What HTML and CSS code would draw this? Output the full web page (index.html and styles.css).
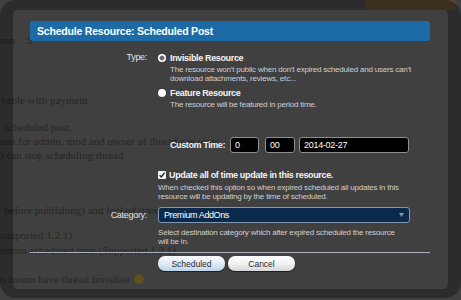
FILE: index.html
```html
<!DOCTYPE html>
<html>
<head>
<meta charset="utf-8">
<link rel="stylesheet" href="styles.css">
</head>
<body>
<div class="page">
  <header class="page-head"><span class="promo"></span></header>
  <p class="line l1"><span class="crumb">sen</span><span class="crumb crumb-s">S</span></p>
  <p class="line l2">vable with payment</p>
  <div class="para p3">
    <p class="line indent4">scheduled post.</p>
    <p class="line">ons for admin, mod and owner of thread can view</p>
    <p class="line">) can stop scheduling thread</p>
  </div>
  <p class="line l6 indent4">before publishing) and locked (thread is set after scheduled time expired)</p>
  <div class="para p7">
    <p class="line tall">supported 1.2.1)</p>
    <p class="line tall">ustom scheduled time (Supported 1.2.1)</p>
  </div>
  <p class="line l9">n forum have thread invisible <span class="smiley"></span></p>
</div>

<div class="overlay">
  <div class="dialog">
    <h2 class="dialog-title">Schedule Resource: Scheduled Post</h2>
    <form class="form">
      <dl class="ctrl-unit unit-type">
        <dt class="label">Type:</dt>
        <dd class="ctrl">
          <div class="choice"><span class="radio checked"></span><span class="choice-label">Invisible Resource</span></div>
          <p class="explain indented">The resource won't public when don't expired scheduled and users can't download attachments, reviews, etc...</p>
          <div class="choice choice-2"><span class="radio"></span><span class="choice-label">Feature Resource</span></div>
          <p class="explain indented">The resource will be featured in period time.</p>
        </dd>
      </dl>
      <dl class="ctrl-unit unit-time">
        <dt class="label"></dt>
        <dd class="ctrl time-row">
          <span class="time-label">Custom Time:</span>
          <input class="text-input w-hour" type="text" value="0">
          <input class="text-input w-min" type="text" value="00">
          <input class="text-input w-date" type="text" value="2014-02-27">
        </dd>
      </dl>
      <dl class="ctrl-unit unit-check">
        <dt class="label"></dt>
        <dd class="ctrl">
          <div class="check-row">
            <svg class="checkbox" width="8" height="8" viewBox="0 0 8 8"><rect x="0" y="0" width="8" height="8" rx="1" fill="#f4f4f4"/><path d="M1.6 4.2 L3.3 6 L6.6 1.6" fill="none" stroke="#222" stroke-width="1.4"/></svg>
            <span class="check-label">Update all of time update in this resource.</span>
          </div>
          <p class="explain hint">When checked this option so when expired scheduled all updates in this resource will be updating by the time of scheduled.</p>
        </dd>
      </dl>
      <dl class="ctrl-unit unit-cat">
        <dt class="label label-cat">Category:</dt>
        <dd class="ctrl">
          <div class="select"><span class="select-text">Premium AddOns</span><svg class="select-arrow" width="5" height="4" viewBox="0 0 5 4"><path d="M0 0 H5 L2.5 4 Z" fill="#8a97a6"/></svg></div>
          <p class="explain hint-cat">Select destination category which after expired scheduled the resource will be in.</p>
        </dd>
      </dl>
      <div class="submit-unit">
        <button type="button" class="btn btn-primary">Scheduled</button>
        <button type="button" class="btn btn-cancel">Cancel</button>
      </div>
    </form>
  </div>
</div>
</body>
</html>
```

FILE: styles.css
```css
html, body {
  margin: 0;
  padding: 0;
}
body {
  width: 461px;
  height: 300px;
  overflow: hidden;
  position: relative;
  background: #404040;
  color: #272727;
  font-family: "Liberation Serif", "Times New Roman", serif;
}

/* page underneath */
.page {
  font-size: 11px;
  line-height: 14px;
}
.page-head {
  display: flex;
  height: 10px;
}
.promo {
  margin-left: auto;
  margin-right: 6px;
  width: 90px;
  background: #56442f;
}
.line {
  margin: 0;
  white-space: nowrap;
}
.l1 {
  margin-top: 23px;
  display: flex;
}
.crumb-s { margin-left: 12px; }
.l2 { margin-top: 46px; text-indent: 1px; }
.p3 { margin-top: 13px; }
.indent4 { text-indent: 4px; }
.l6 { margin-top: 41px; }
.p7 { margin-top: 11px; }
.tall { line-height: 15px; }
.l9 { margin-top: 14px; }
.smiley {
  display: inline-block;
  width: 10px;
  height: 10px;
  border-radius: 50%;
  background: #5e5120;
  vertical-align: -1px;
  margin-left: 2px;
}

/* overlay */
.overlay {
  position: absolute;
  left: 0;
  top: 0;
  width: 461px;
  height: 298px;
  box-sizing: border-box;
  border-style: solid;
  border-color: rgba(0, 0, 0, 0.31);
  border-width: 10px 13px 9px 13px;
  border-radius: 16px;
  font-family: "Liberation Sans", Arial, sans-serif;
  color: #fff;
}
.dialog {
  padding: 11px 18px 0 17px;
}
.dialog-title {
  margin: 0;
  height: 20px;
  line-height: 20px;
  padding-left: 7px;
  background: #1c6ba7;
  border-radius: 3px;
  color: #fff;
  font-size: 10.5px;
  letter-spacing: -0.2px;
  font-weight: bold;
}

.form {
  margin: 10px 0 0 0;
}
.ctrl-unit {
  display: grid;
  grid-template-columns: 117px 1fr;
  column-gap: 11px;
  margin: 0;
}
.label {
  margin: 0;
  text-align: right;
  font-size: 9px;
  letter-spacing: -0.3px;
  line-height: 13px;
  color: #e2e2e2;
}
.ctrl {
  margin: 0;
}

.choice {
  display: flex;
  align-items: center;
  height: 13px;
  gap: 4px;
}
.choice-2 { margin-top: 3px; }
.radio {
  width: 8px;
  height: 8px;
  border-radius: 50%;
  background: radial-gradient(circle at 50% 40%, #ffffff 55%, #c9c9c9 100%);
}
.radio.checked {
  background: radial-gradient(circle, #5a5a5a 0, #6d6d6d 1.6px, #9a9a9a 2.3px, #ffffff 2.9px);
}
.choice-label {
  font-size: 9px;
  letter-spacing: -0.35px;
  font-weight: bold;
  color: #f4f4f4;
}
.explain {
  margin: 1px 0 0 0;
  max-width: 250px;
  font-size: 8px;
  letter-spacing: -0.2px;
  line-height: 9px;
  color: #cfcfcf;
}
.indented {
  margin-left: 12px;
}

.unit-time { margin-top: 28px; }
.time-row {
  display: flex;
  align-items: center;
  padding-left: 12px;
}
.time-label {
  font-size: 9px;
  letter-spacing: -0.4px;
  font-weight: bold;
  color: #f0f0f0;
  margin-right: 5px;
}
.text-input {
  box-sizing: border-box;
  height: 16px;
  margin: 0;
  padding: 0 4px;
  background: #000;
  border: 1px solid #8e8e8e;
  border-radius: 3px;
  color: #fff;
  font-family: inherit;
  font-size: 9px;
  letter-spacing: -0.3px;
  outline: none;
}
.w-hour { width: 29px; margin-right: 6px; }
.w-min { width: 30px; margin-right: 4px; }
.w-date { width: 110px; }

.unit-check { margin-top: 15px; }
.check-row {
  display: flex;
  align-items: center;
  height: 13px;
  gap: 3px;
}
.checkbox { display: block; }
.check-label {
  font-size: 9px;
  letter-spacing: -0.35px;
  font-weight: bold;
  color: #f4f4f4;
}
.hint { margin-top: 2px; }

.unit-cat { margin-top: 6px; }
.label-cat { line-height: 16px; }
.select {
  box-sizing: border-box;
  width: 252px;
  height: 16px;
  display: flex;
  align-items: center;
  padding: 0 5px;
  background: #0b2a4b;
  border: 1px solid #8198b0;
  border-radius: 3px;
}
.select-text {
  flex: 1;
  font-size: 9px;
  letter-spacing: -0.4px;
  color: #fff;
}
.select-arrow { display: block; }
.hint-cat { margin-top: 5px; max-width: 240px; }

.submit-unit {
  margin-top: 6px;
  border-top: 1px solid #aab5c1;
  padding: 3px 0 0 128px;
  display: flex;
  gap: 3px;
}
.btn {
  width: 67px;
  height: 15px;
  margin: 0;
  padding: 0;
  border: none;
  border-radius: 7px;
  box-shadow: 0 1px 1px rgba(0, 0, 0, 0.55);
  font-family: inherit;
  font-size: 8.5px;
  color: #2c2c2c;
}
.btn-primary {
  background: linear-gradient(#fbfdff, #dde9f5 55%, #bdd4ea);
}
.btn-cancel {
  background: linear-gradient(#ffffff, #f0f0f0 55%, #d6d6d6);
}
```
